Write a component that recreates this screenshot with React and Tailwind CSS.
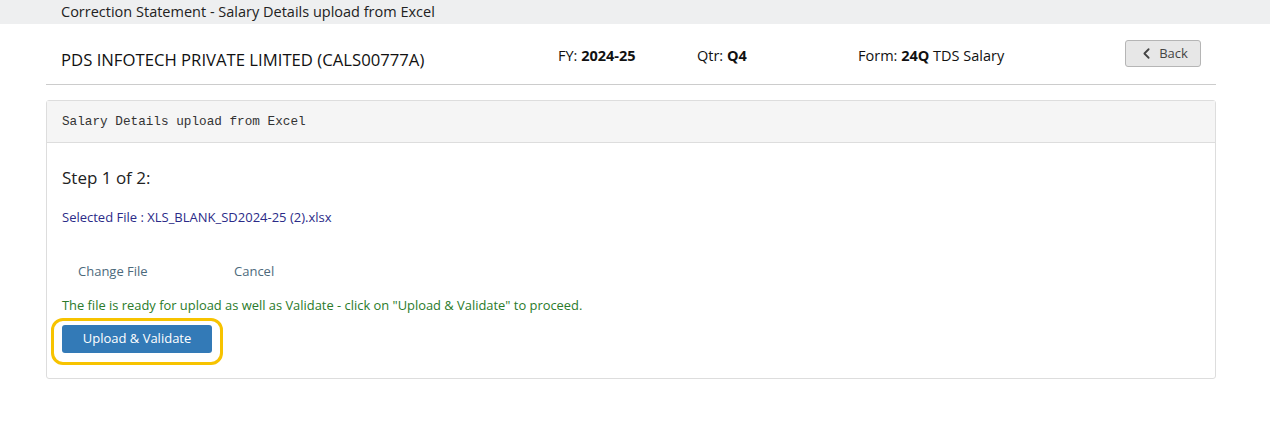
import { ChevronLeft } from "lucide-react";

export default function App() {
  return (
    <div className="min-h-[432px] bg-white font-['Open_Sans',sans-serif] text-[#333]">
      <div className="h-6 bg-[#eeeff0] pl-[61px] text-[14.5px] leading-6 text-[#222]">
        Correction Statement - Salary Details upload from Excel
      </div>

      <div className="ml-[46px] w-[1170px]">
        <div className="flex h-[61px] items-center border-b border-[#ccc] pl-[15px] pr-[15px]">
          <div className="w-[497px] pt-[12px] text-[16.7px] text-[#111]">
            PDS INFOTECH PRIVATE LIMITED (CALS00777A)
          </div>
          <div className="w-[139px] pt-[3px] text-[14.5px] text-[#111]">
            FY: <b>2024-25</b>
          </div>
          <div className="w-[161px] pt-[3px] text-[14.5px] text-[#111]">
            Qtr: <b>Q4</b>
          </div>
          <div className="flex-1 pt-[3px] text-[14.5px] text-[#111]">
            Form: <b>24Q</b> TDS Salary
          </div>
          <button className="mt-[-1px] flex h-[27px] w-[76px] items-center justify-center gap-[4px] rounded-[3px] border border-[#b5b5b5] bg-[#e7e7e7] text-[13px] text-[#444]">
            <ChevronLeft size={17} strokeWidth={2.5} />
            Back
          </button>
        </div>

        <div className="mt-[15px] rounded-[3px] border border-[#ddd]">
          <div className="flex h-[42px] items-center border-b border-[#ddd] bg-[#f5f5f5] pl-[15px] font-['Liberation_Mono',monospace] text-[12.7px] text-[#333]">
            Salary Details upload from Excel
          </div>
          <div className="px-[15px] pb-[13px] pt-[22px]">
            <div className="text-[17px] text-[#222]">Step 1 of 2:</div>
            <div className="mt-[17px] text-[13px] text-[#2b2b88]">
              Selected File : XLS_BLANK_SD2024-25 (2).xlsx
            </div>
            <div className="mt-[35px] flex pl-[16px] text-[13px] text-[#4d6a7c]">
              <span className="w-[156px]">Change File</span>
              <span>Cancel</span>
            </div>
            <div className="mt-[14px] text-[12.9px] text-[#2a7a2a]">
              The file is ready for upload as well as Validate - click on "Upload &amp; Validate" to proceed.
            </div>
            <div className="ml-[-11px] mt-[3px] inline-flex rounded-[12px] border-[3px] border-[#f7c300] px-[8px] pb-[9px] pt-[4px]">
              <button className="h-[28px] w-[150px] rounded-[3px] bg-[#337ab7] text-[13px] text-white">
                Upload &amp; Validate
              </button>
            </div>
          </div>
        </div>
      </div>
    </div>
  );
}
